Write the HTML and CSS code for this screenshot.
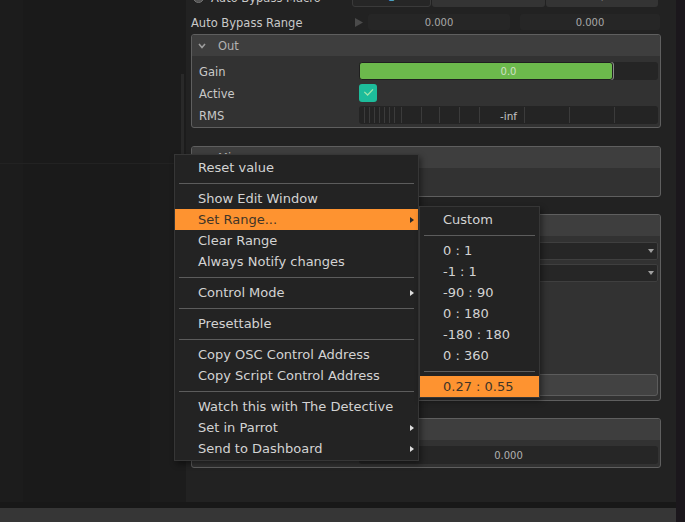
FILE: index.html
```html
<!DOCTYPE html>
<html>
<head>
<meta charset="utf-8">
<title>Inspector</title>
<link rel="stylesheet" href="styles.css">
</head>
<body>
<div class="app">
  <aside class="outliner">
    <div class="outliner-part outliner-top">
      <div class="col col-a"></div>
      <div class="col col-b"></div>
      <div class="col col-c"><div class="scroll-thumb"></div></div>
    </div>
    <div class="outliner-rule"></div>
    <div class="outliner-part outliner-bottom">
      <div class="col col-a"></div>
      <div class="col col-b"></div>
      <div class="col col-c"></div>
    </div>
  </aside>

  <main class="inspector">
    <div class="inspector-content">
      <div class="row row-macro">
        <span class="radio"></span>
        <span class="row-label macro-label">Auto Bypass Macro</span>
        <div class="segmented">
          <span class="seg seg-value">1</span>
          <span class="seg">-</span>
          <span class="seg">+</span>
        </div>
      </div>

      <div class="row row-range">
        <span class="row-label range-label">Auto Bypass Range</span>
        <svg class="play" width="8" height="9" viewBox="0 0 8 9"><polygon points="0,0 8,4.5 0,9" fill="#4b4b4b"/></svg>
        <span class="field range-min">0.000</span>
        <span class="field range-max">0.000</span>
      </div>

      <section class="panel panel-out">
        <header class="panel-head">
          <svg class="chev" width="8" height="6" viewBox="0 0 8 6"><polyline points="1,1 4,4.5 7,1" fill="none" stroke="#9c9c9c" stroke-width="1.6"/></svg>
          <span class="panel-title">Out</span>
        </header>
        <div class="panel-body">
          <div class="prow">
            <span class="plabel">Gain</span>
            <div class="slider">
              <div class="slider-fill" style="width:254px"></div>
              <span class="slider-text">0.0</span>
            </div>
          </div>
          <div class="prow">
            <span class="plabel">Active</span>
            <span class="checkbox">
              <svg width="18" height="18" viewBox="0 0 18 18"><polyline points="5.3,7.9 8.6,11 14,5.4" fill="none" stroke="#9fe5ab" stroke-width="1.3"/></svg>
            </span>
          </div>
          <div class="prow">
            <span class="plabel">RMS</span>
            <div class="meter">
              <svg class="meter-ticks" width="299" height="18" viewBox="0 0 299 18">
                <g stroke="#3b3b3b" stroke-width="1">
                  <line x1="5.5" y1="1" x2="5.5" y2="17"/>
                  <line x1="10.5" y1="1" x2="10.5" y2="17"/>
                  <line x1="15.5" y1="1" x2="15.5" y2="17"/>
                  <line x1="20.5" y1="1" x2="20.5" y2="17"/>
                  <line x1="25.5" y1="1" x2="25.5" y2="17"/>
                  <line x1="30.5" y1="1" x2="30.5" y2="17"/>
                  <line x1="35.5" y1="1" x2="35.5" y2="17"/>
                  <line x1="42.5" y1="1" x2="42.5" y2="17"/>
                  <line x1="62.5" y1="1" x2="62.5" y2="17"/>
                  <line x1="80.5" y1="1" x2="80.5" y2="17"/>
                  <line x1="100.5" y1="1" x2="100.5" y2="17"/>
                  <line x1="120.5" y1="1" x2="120.5" y2="17"/>
                  <line x1="165.5" y1="1" x2="165.5" y2="17"/>
                  <line x1="210.5" y1="1" x2="210.5" y2="17"/>
                  <line x1="255.5" y1="1" x2="255.5" y2="17"/>
                </g>
              </svg>
              <span class="meter-text">-inf</span>
            </div>
          </div>
        </div>
      </section>

      <section class="panel panel-mix">
        <header class="panel-head">
          <svg class="chev" width="8" height="6" viewBox="0 0 8 6"><polyline points="1,1 4,4.5 7,1" fill="none" stroke="#9c9c9c" stroke-width="1.6"/></svg>
          <span class="panel-title">Mix</span>
        </header>
        <div class="panel-body panel-body-empty"></div>
      </section>

      <section class="panel panel-routing">
        <header class="panel-head">
          <svg class="chev" width="8" height="6" viewBox="0 0 8 6"><polyline points="1,1 4,4.5 7,1" fill="none" stroke="#9c9c9c" stroke-width="1.6"/></svg>
          <span class="panel-title"></span>
        </header>
        <div class="panel-body panel-body-tall">
          <div class="prow">
            <span class="plabel"></span>
            <div class="dropdown"><span class="dd-arrow"></span></div>
          </div>
          <div class="prow prow-tight">
            <span class="plabel"></span>
            <div class="dropdown"><span class="dd-arrow"></span></div>
          </div>
          <div class="wide-button"></div>
        </div>
      </section>

      <section class="panel panel-value">
        <header class="panel-head">
          <svg class="chev" width="8" height="6" viewBox="0 0 8 6"><polyline points="1,1 4,4.5 7,1" fill="none" stroke="#9c9c9c" stroke-width="1.6"/></svg>
          <span class="panel-title"></span>
        </header>
        <div class="panel-body">
          <div class="prow">
            <span class="plabel"></span>
            <span class="value-field">0.000</span>
          </div>
        </div>
      </section>
    </div>
  </main>

  <div class="right-strip"></div>
  <div class="bottom-rule"></div>
  <div class="statusbar"></div>

  <div class="menu context-menu">
    <div class="item">Reset value</div>
    <div class="sep"></div>
    <div class="item">Show Edit Window</div>
    <div class="item active">Set Range...<span class="arrow"></span></div>
    <div class="item">Clear Range</div>
    <div class="item">Always Notify changes</div>
    <div class="sep"></div>
    <div class="item">Control Mode<span class="arrow"></span></div>
    <div class="sep"></div>
    <div class="item">Presettable</div>
    <div class="sep"></div>
    <div class="item">Copy OSC Control Address</div>
    <div class="item">Copy Script Control Address</div>
    <div class="sep"></div>
    <div class="item">Watch this with The Detective</div>
    <div class="item">Set in Parrot<span class="arrow"></span></div>
    <div class="item">Send to Dashboard<span class="arrow"></span></div>
  </div>

  <div class="menu sub-menu">
    <div class="item">Custom</div>
    <div class="sep"></div>
    <div class="item">0 : 1</div>
    <div class="item">-1 : 1</div>
    <div class="item">-90 : 90</div>
    <div class="item">0 : 180</div>
    <div class="item">-180 : 180</div>
    <div class="item">0 : 360</div>
    <div class="sep"></div>
    <div class="item active">0.27 : 0.55</div>
  </div>
</div>
</body>
</html>
```

FILE: styles.css
```css
* { box-sizing: border-box; }

html, body {
  margin: 0;
  padding: 0;
}

body {
  width: 685px;
  height: 522px;
  overflow: hidden;
  background: #1b1b1b;
  font-family: "DejaVu Sans", "Liberation Sans", sans-serif;
  color: #c8c8c8;
}

.app {
  position: relative;
  display: grid;
  grid-template-columns: 186px 490px 9px;
  grid-template-rows: 502px 6px 14px;
  width: 685px;
  height: 522px;
}

/* ---------- left outliner ---------- */
.outliner {
  grid-column: 1;
  grid-row: 1;
  display: flex;
  flex-direction: column;
  background: #1b1b1b;
}
.outliner-part {
  display: grid;
  grid-template-columns: 23px 127px 36px;
}
.outliner-top { height: 163px; }
.outliner-bottom { flex: 1; }
.outliner-rule { height: 1px; background: #222222; }
.col-a { background: #1c1c1c; }
.col-b { background: #1a1a1a; }
.col-c {
  background: #1c1c1c;
  display: flex;
  justify-content: flex-end;
  padding-right: 2px;
}
.scroll-thumb {
  width: 3px;
  height: 86px;
  margin-top: 74px;
  background: #292929;
}

/* ---------- inspector ---------- */
.inspector {
  grid-column: 2;
  grid-row: 1;
  background: #222222;
  overflow: hidden;
  padding-left: 5px;
}
.inspector-content {
  width: 470px;
  display: flex;
  flex-direction: column;
}

.row {
  display: flex;
  align-items: center;
}
.row-label {
  font-size: 11.5px;
  color: #c9c9c9;
  white-space: nowrap;
  padding-top: 2px;
}

.row-macro {
  height: 20px;
  margin-top: -13px;
  margin-bottom: 6px;
}
.radio {
  width: 11px;
  height: 11px;
  margin-left: 2px;
  border-radius: 50%;
  background: radial-gradient(circle at 50% 40%, #6a6a6a, #444444);
  border: 1px solid #777777;
}
.macro-label { margin-left: 7px; }
.segmented {
  margin-left: auto;
  margin-right: 3px;
  width: 306px;
  height: 19px;
  display: flex;
  gap: 1px;
}
.seg {
  display: flex;
  align-items: center;
  justify-content: center;
  font-size: 11px;
  color: #777777;
  background: #343434;
  border-radius: 3px;
}
.seg:nth-child(1) { width: 79px; }
.seg:nth-child(2) { width: 113px; }
.seg:nth-child(3) { width: 112px; }
.seg-value {
  background: #262626;
  border: 1px solid #3a3a3a;
  color: #4a9ec4;
}

.row-range {
  height: 18px;
  margin-bottom: 3px;
}
.range-label { width: 162px; }
.play { margin-left: 2px; flex: none; }
.field {
  height: 16px;
  display: flex;
  align-items: center;
  justify-content: center;
  font-size: 10px;
  color: #a8a8a8;
  background: #262626;
  border-radius: 3px;
  padding-top: 1px;
}
.range-min { margin-left: 5px; width: 142px; }
.range-max { margin-left: 10px; width: 140px; }

/* ---------- panels ---------- */
.panel {
  width: 470px;
  border: 1px solid #5f5f5f;
  border-radius: 3px;
  background: #323232;
  margin-bottom: 17px;
  overflow: hidden;
}
.panel-out { margin-bottom: 18px; }
.panel-head {
  height: 21px;
  background: #3e3e3e;
  display: flex;
  align-items: center;
  padding-left: 6px;
}
.chev { flex: none; }
.panel-title {
  margin-left: 12px;
  font-size: 11.5px;
  color: #b2b2b2;
}
.panel-body {
  display: flex;
  flex-direction: column;
  gap: 4px;
  padding: 6px 2px 3px 7px;
}
.panel-body-empty { height: 28px; }
.panel-body-tall {
  height: 164px;
  padding-bottom: 4px;
  gap: 0;
}
.prow {
  display: grid;
  grid-template-columns: 160px 299px;
  height: 18px;
  align-items: center;
}
.prow-tight { margin-top: 4px; }
.plabel {
  font-size: 11.5px;
  color: #c9c9c9;
  padding-top: 2px;
}

.slider {
  display: grid;
  height: 18px;
  background: #252525;
  border-radius: 3px;
}
.slider-fill {
  grid-area: 1 / 1;
  justify-self: start;
  height: 18px;
  background: #6cb94c;
  border: 1px solid #1f1f1f;
  border-radius: 3px;
  box-shadow: 1px 0 0 #8a8a8a;
}
.slider-text {
  grid-area: 1 / 1;
  justify-self: center;
  align-self: center;
  font-size: 10px;
  color: #cfe0c6;
  padding-top: 1px;
}

.checkbox {
  width: 18px;
  height: 18px;
  border-radius: 3px;
  background: #1dbc9b;
  display: block;
}
.checkbox svg { display: block; }

.meter {
  display: grid;
  height: 18px;
  background: #242424;
  border-radius: 3px;
}
.meter-ticks {
  grid-area: 1 / 1;
  display: block;
}
.meter-text {
  grid-area: 1 / 1;
  justify-self: center;
  align-self: center;
  font-size: 10.5px;
  color: #c4c4c4;
  background: #242424;
  padding: 1px 1px 0;
}

.dropdown {
  height: 18px;
  background: #262626;
  border: 1px solid #3f3f3f;
  border-radius: 2px;
  display: flex;
  align-items: center;
  justify-content: flex-end;
  padding-right: 3px;
}
.dd-arrow {
  width: 0;
  height: 0;
  border-top: 4px solid #a0a0a0;
  border-left: 3px solid transparent;
  border-right: 3px solid transparent;
}
.wide-button {
  margin-top: auto;
  height: 22px;
  background: #424242;
  border: 1px solid #5c5c5c;
  border-radius: 3px;
}
.value-field {
  height: 18px;
  background: #262626;
  border-radius: 3px;
  display: flex;
  align-items: center;
  justify-content: center;
  font-size: 10px;
  color: #b0b0b0;
  padding-top: 1px;
}

/* ---------- frame ---------- */
.right-strip {
  grid-column: 3;
  grid-row: 1 / 4;
  background: #1b171c;
}
.bottom-rule {
  grid-column: 1 / 3;
  grid-row: 2;
  background: #181818;
}
.statusbar {
  grid-column: 1 / 3;
  grid-row: 3;
  background: #363636;
}

/* ---------- popup menus ---------- */
.menu {
  position: absolute;
  background: #232323;
  border: 1px solid #363636;
  box-shadow: 2px 3px 6px rgba(0, 0, 0, 0.45);
  font-size: 13px;
  color: #d3d3d3;
  display: flex;
  flex-direction: column;
}
.context-menu {
  left: 174px;
  top: 154px;
  width: 245px;
  padding: 2px 0 1px;
}
.sub-menu {
  left: 419px;
  top: 206px;
  width: 121px;
  padding: 2px 0 0;
}
.item {
  height: 21px;
  display: flex;
  align-items: center;
  padding-left: 23px;
  white-space: nowrap;
}
.item.active {
  background: #fe9330;
  color: #3f3528;
}
.sep {
  height: 10px;
  display: flex;
  align-items: center;
  padding: 0 4px;
}
.sep::before {
  content: "";
  flex: 1;
  height: 1px;
  background: #5c5c5c;
}
.arrow {
  margin-left: auto;
  margin-right: 4px;
  width: 0;
  height: 0;
  border-left: 4px solid #dddddd;
  border-top: 3.5px solid transparent;
  border-bottom: 3.5px solid transparent;
}
.item.active .arrow { border-left-color: #2a2a2a; }
```
